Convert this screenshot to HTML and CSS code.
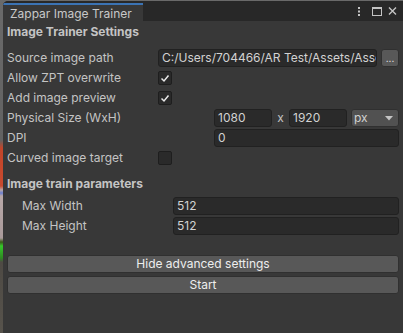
FILE: index.html
```html
<!DOCTYPE html>
<html>
<head>
<meta charset="utf-8">
<link rel="stylesheet" href="styles.css">
</head>
<body>
<div class="window">
  <div class="titlebar">
    <div class="tab">Zappar Image Trainer</div>
    <svg class="tab-actions" width="45" height="18" viewBox="0 0 45 18">
      <g fill="#c4c4c4">
        <rect x="2" y="4" width="2" height="2"/>
        <rect x="2" y="7.5" width="2" height="2"/>
        <rect x="2" y="11" width="2" height="2"/>
      </g>
      <rect x="16.5" y="4.5" width="9" height="8" fill="none" stroke="#c4c4c4" stroke-width="1"/>
      <rect x="16" y="4" width="10" height="2" fill="#c4c4c4"/>
      <path d="M33 4.5 L40 11.5 M40 4.5 L33 11.5" stroke="#c4c4c4" stroke-width="1.4" fill="none"/>
    </svg>
  </div>
  <div class="content">
    <div class="section-title first">Image Trainer Settings</div>
    <div class="row">
      <div class="label">Source image path</div>
      <div class="value">
        <div class="field grow">C:/Users/704466/AR Test/Assets/Asse</div>
        <div class="btn dots">...</div>
      </div>
    </div>
    <div class="row">
      <div class="label">Allow ZPT overwrite</div>
      <div class="value"><div class="check on"><svg width="10" height="10" viewBox="0 0 10 10"><path d="M1.5 5.5 L4 8 L8.5 2.5" fill="none" stroke="#e8e8e8" stroke-width="1.5"/></svg></div></div>
    </div>
    <div class="row">
      <div class="label">Add image preview</div>
      <div class="value"><div class="check on"><svg width="10" height="10" viewBox="0 0 10 10"><path d="M1.5 5.5 L4 8 L8.5 2.5" fill="none" stroke="#e8e8e8" stroke-width="1.5"/></svg></div></div>
    </div>
    <div class="row">
      <div class="label">Physical Size (WxH)</div>
      <div class="value shifted">
        <div class="field size">1080</div>
        <div class="times">x</div>
        <div class="field size">1920</div>
        <div class="popup"><span>px</span><svg width="8" height="5" viewBox="0 0 8 5"><path d="M0 0 H8 L4 4.5 Z" fill="#c4c4c4"/></svg></div>
      </div>
    </div>
    <div class="row">
      <div class="label">DPI</div>
      <div class="value shifted"><div class="field grow">0</div></div>
    </div>
    <div class="row">
      <div class="label">Curved image target</div>
      <div class="value"><div class="check"></div></div>
    </div>
    <div class="section-title second">Image train parameters</div>
    <div class="row indent">
      <div class="label">Max Width</div>
      <div class="value"><div class="field grow">512</div></div>
    </div>
    <div class="row indent">
      <div class="label">Max Height</div>
      <div class="value"><div class="field grow">512</div></div>
    </div>
    <div class="buttons">
      <div class="btn wide">Hide advanced settings</div>
      <div class="btn wide">Start</div>
    </div>
  </div>
</div>
</body>
</html>
```
FILE: styles.css
```css
html, body {
  margin: 0;
  padding: 0;
}
body {
  width: 403px;
  height: 333px;
  overflow: hidden;
  font-family: Inter, "Noto Sans", "DejaVu Sans", sans-serif;
  font-size: 12px;
  color: #c4c4c4;
  background: linear-gradient(to bottom,
    #6a6a6a 0px, #626262 140px,
    #c2452a 148px, #c84a2e 186px,
    #b9a7a7 190px, #6b7fd0 193px, #b8a8a8 196px, #a99a9a 238px,
    #3a5a1a 242px, #36c82a 246px, #2e8a22 258px,
    #4e4a44 262px, #57534c 333px);
  display: flex;
}
.window {
  margin-left: 3px;
  margin-top: 1px;
  flex: 1;
  height: 332px;
  background: #383838;
  border-top-left-radius: 5px;
  overflow: hidden;
  display: flex;
  flex-direction: column;
}
.titlebar {
  height: 20px;
  background: #282828;
  display: flex;
  align-items: flex-end;
  flex: none;
}
.tab {
  width: 140px;
  height: 18px;
  box-sizing: border-box;
  background: #383838;
  border-top: 2px solid #3b73b4;
  padding-left: 7px;
  line-height: 17px;
  color: #c8c8c8;
  white-space: nowrap;
}
.tab-actions {
  margin-left: auto;
  margin-right: 2px;
  align-self: flex-start;
  margin-top: 2px;
}
.content {
  padding: 0 4px 0 4px;
  display: flex;
  flex-direction: column;
}
.section-title {
  font-weight: 700;
  height: 18px;
  line-height: 18px;
  color: #c4c4c4;
}
.section-title.first {
  margin-top: 2px;
  margin-bottom: 8px;
}
.section-title.second {
  margin-top: 6px;
  margin-bottom: 4px;
}
.row {
  display: flex;
  height: 18px;
  margin-bottom: 2px;
  line-height: 18px;
}
.label {
  width: 151px;
  flex: none;
  white-space: nowrap;
}
.row.indent .label {
  padding-left: 15px;
  width: 151px;
}
.value {
  flex: 1;
  display: flex;
  align-items: center;
  min-width: 0;
}
.value.shifted {
  padding-left: 56px;
}
.field {
  height: 18px;
  box-sizing: border-box;
  background: #2a2a2a;
  border: 1px solid #212121;
  border-radius: 3px;
  color: #d2d2d2;
  padding: 0 3px;
  line-height: 16px;
  white-space: nowrap;
  overflow: hidden;
}
.field.grow {
  flex: 1;
  min-width: 0;
}
.field.size {
  width: 58px;
}
.times {
  width: 17px;
  text-align: center;
  color: #c4c4c4;
}
.popup {
  margin-left: 4px;
  flex: 1;
  height: 18px;
  box-sizing: border-box;
  background: #515151;
  border: 1px solid #303030;
  border-radius: 3px;
  display: flex;
  align-items: center;
  justify-content: space-between;
  padding: 0 5px 0 2px;
  color: #d2d2d2;
  line-height: 16px;
}
.popup svg {
  display: block;
}
.btn {
  box-sizing: border-box;
  background: #585858;
  border: 1px solid #303030;
  border-radius: 3px;
  color: #eeeeee;
  text-align: center;
  white-space: nowrap;
}
.btn.dots {
  width: 18px;
  height: 18px;
  margin-left: 4px;
  line-height: 16px;
  font-size: 10px;
  overflow: hidden;
}
.check {
  width: 14px;
  height: 14px;
  box-sizing: border-box;
  background: #2a2a2a;
  border: 1px solid #1e1e1e;
  border-radius: 2px;
  display: flex;
  align-items: center;
  justify-content: center;
}
.check svg {
  display: block;
}
.buttons {
  margin-top: 18px;
  display: flex;
  flex-direction: column;
  gap: 3px;
}
.btn.wide {
  height: 18px;
  line-height: 16px;
}
```
